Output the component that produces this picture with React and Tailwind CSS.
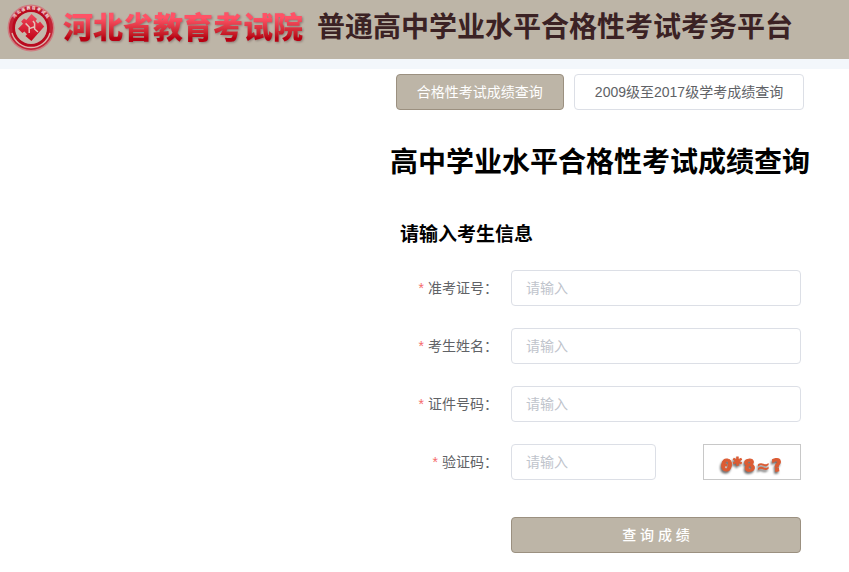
import React from 'react';

const fields = [
    { id: 'ticket', label: '准考证号：' },
    { id: 'name', label: '考生姓名：' },
    { id: 'idcard', label: '证件号码：' },
];

const inputClass =
    'h-9 min-w-0 rounded border border-[#dcdfe6] bg-white px-[14px] text-sm text-[#606266] outline-none placeholder:text-[#c0c4cc] focus:border-[#bdb5a7]';

const Logo = () => (
    <svg className="h-12 w-12 shrink-0" viewBox="0 0 48 48" aria-hidden="true">
        <defs>
            <linearGradient id="logo-red" x1="0" y1="0" x2="0" y2="1">
                <stop offset="0" stopColor="#f04a5e" />
                <stop offset="1" stopColor="#c00014" />
            </linearGradient>
            <path id="logo-arc" d="M5.4 24 A18.6 18.6 0 0 1 42.6 24" />
        </defs>
        <circle cx="24" cy="24" r="23.5" fill="#cf7c80" />
        <circle cx="24" cy="24" r="22" fill="#c32336" />
        <circle cx="24" cy="24" r="17.2" fill="none" stroke="#b90a1e" strokeWidth="3" />
        <path d="M5 29 A19.7 19.7 0 0 0 43 29" fill="none" stroke="#dcb5ac" strokeWidth="1.3" />
        <circle cx="24" cy="24" r="16" fill="#c4b8ab" />
        <text fill="#f6e6e2" fontSize="4" fontWeight="700" className="font-['Noto_Sans_CJK_SC',sans-serif]">
            <textPath href="#logo-arc" startOffset="50%" textAnchor="middle">河 北 省 教 育 考 试 院</textPath>
        </text>
        <path
            d="M24.5 10 L30 15 L28.6 17 L31 19.4 L33 17.6 L37.2 22.4 L24.4 37 L18.4 32 L20 30.2 L17.4 27.4 L15.4 29 L11 24.8 L16 19.8 L14.2 17.4 L17 14.6 L19.4 16 Z"
            fill="url(#logo-red)"
        />
        <path
            d="M18.6 19.4 L22.2 23 L22.2 29 M22.2 24.6 L27.6 22.8 M26 17 L27.6 19.2 L27.6 25 L31 28"
            fill="none"
            stroke="#e2c4ba"
            strokeWidth="1.5"
        />
    </svg>
);

const Captcha = () => (
    <svg className="h-full w-full" viewBox="0 0 96 34" role="img" aria-label="验证码">
        <g
            className="font-['DejaVu_Sans',sans-serif] [filter:drop-shadow(-1px_2px_1px_#666)]"
            fill="#dc5c34"
            stroke="#dc5c34"
            strokeWidth="1"
            fontWeight="700"
        >
            <text x="17" y="26" fontSize="16" transform="rotate(8 23 21)">0</text>
            <text x="29" y="25" fontSize="17">*</text>
            <text x="40" y="26" fontSize="16" transform="rotate(-8 46 21)">8</text>
            <text x="52" y="27" fontSize="17" strokeWidth="0">≈</text>
            <text x="68" y="26" fontSize="17" transform="rotate(-8 73 20)">?</text>
        </g>
        <circle cx="22" cy="20" r="1.5" fill="#dc5c34" />
    </svg>
);

const Header = () => (
    <header className="border-b-[10px] border-[#f3f7fb] bg-[#bdb5a7]">
        <div className="flex h-[59px] items-center gap-[14px] overflow-hidden pb-1 pl-[7px] whitespace-nowrap">
            <div className="flex items-center gap-2">
                <Logo />
                <span className="bg-linear-to-b from-[#ff5266] from-25% to-[#b80012] to-75% bg-clip-text text-[30px] leading-10 font-black text-transparent [filter:drop-shadow(1px_1px_1px_#8b7a74)]">
                    河北省教育考试院
                </span>
            </div>
            <span className="text-[28px] leading-10 font-bold text-[#3b2224]">普通高中学业水平合格性考试考务平台</span>
        </div>
    </header>
);

const Field = ({ id, label, children }) => (
    <div className="flex items-center">
        <label htmlFor={id} className="w-[121px] shrink-0 pr-[13px] text-right text-sm text-[#606266]">
            <span className="mr-1 text-[#f56c6c]">*</span>
            {label}
        </label>
        {children}
    </div>
);

const App = () => {
    return (
        <div className="min-h-screen bg-white font-['Liberation_Sans','Noto_Sans_CJK_SC',sans-serif] text-black" lang="zh-CN">
            <Header />
            <main className="ml-auto w-full max-w-[459px] pt-[5px] pr-[39px] pb-5">
                <nav className="flex justify-center gap-[10px] whitespace-nowrap">
                    <button type="button" className="h-9 rounded border border-[#9b9080] bg-[#bdb5a7] px-5 text-sm text-white">
                        合格性考试成绩查询
                    </button>
                    <button type="button" className="h-9 rounded border border-[#dcdfe6] bg-white px-5 text-sm text-[#606266]">
                        2009级至2017级学考成绩查询
                    </button>
                </nav>
                <h1 className="mt-[33px] text-center text-[28px] leading-10 font-bold whitespace-nowrap">高中学业水平合格性考试成绩查询</h1>
                <form className="pr-[9px]" onSubmit={(e) => e.preventDefault()}>
                    <h2 className="mt-10 mb-[23px] pl-[10px] text-[19px] leading-6 font-bold">请输入考生信息</h2>
                    <div className="flex flex-col gap-[22px]">
                        {fields.map((field) => (
                            <Field key={field.id} id={field.id} label={field.label}>
                                <input id={field.id} type="text" placeholder="请输入" className={`${inputClass} flex-1`} />
                            </Field>
                        ))}
                        <Field id="code" label="验证码：">
                            <div className="flex min-w-0 flex-1 justify-between">
                                <input id="code" type="text" placeholder="请输入" className={`${inputClass} w-1/2`} />
                                <button type="button" aria-label="刷新验证码" className="h-9 w-[98px] border border-[#c8c8c8] bg-white">
                                    <Captcha />
                                </button>
                            </div>
                        </Field>
                    </div>
                    <div className="mt-[37px] flex pl-[121px]">
                        <button type="submit" className="h-9 flex-1 rounded border border-[#9b9080] bg-[#bdb5a7] text-sm font-medium text-white">
                            查 询 成 绩
                        </button>
                    </div>
                </form>
            </main>
        </div>
    );
};

export default App;
